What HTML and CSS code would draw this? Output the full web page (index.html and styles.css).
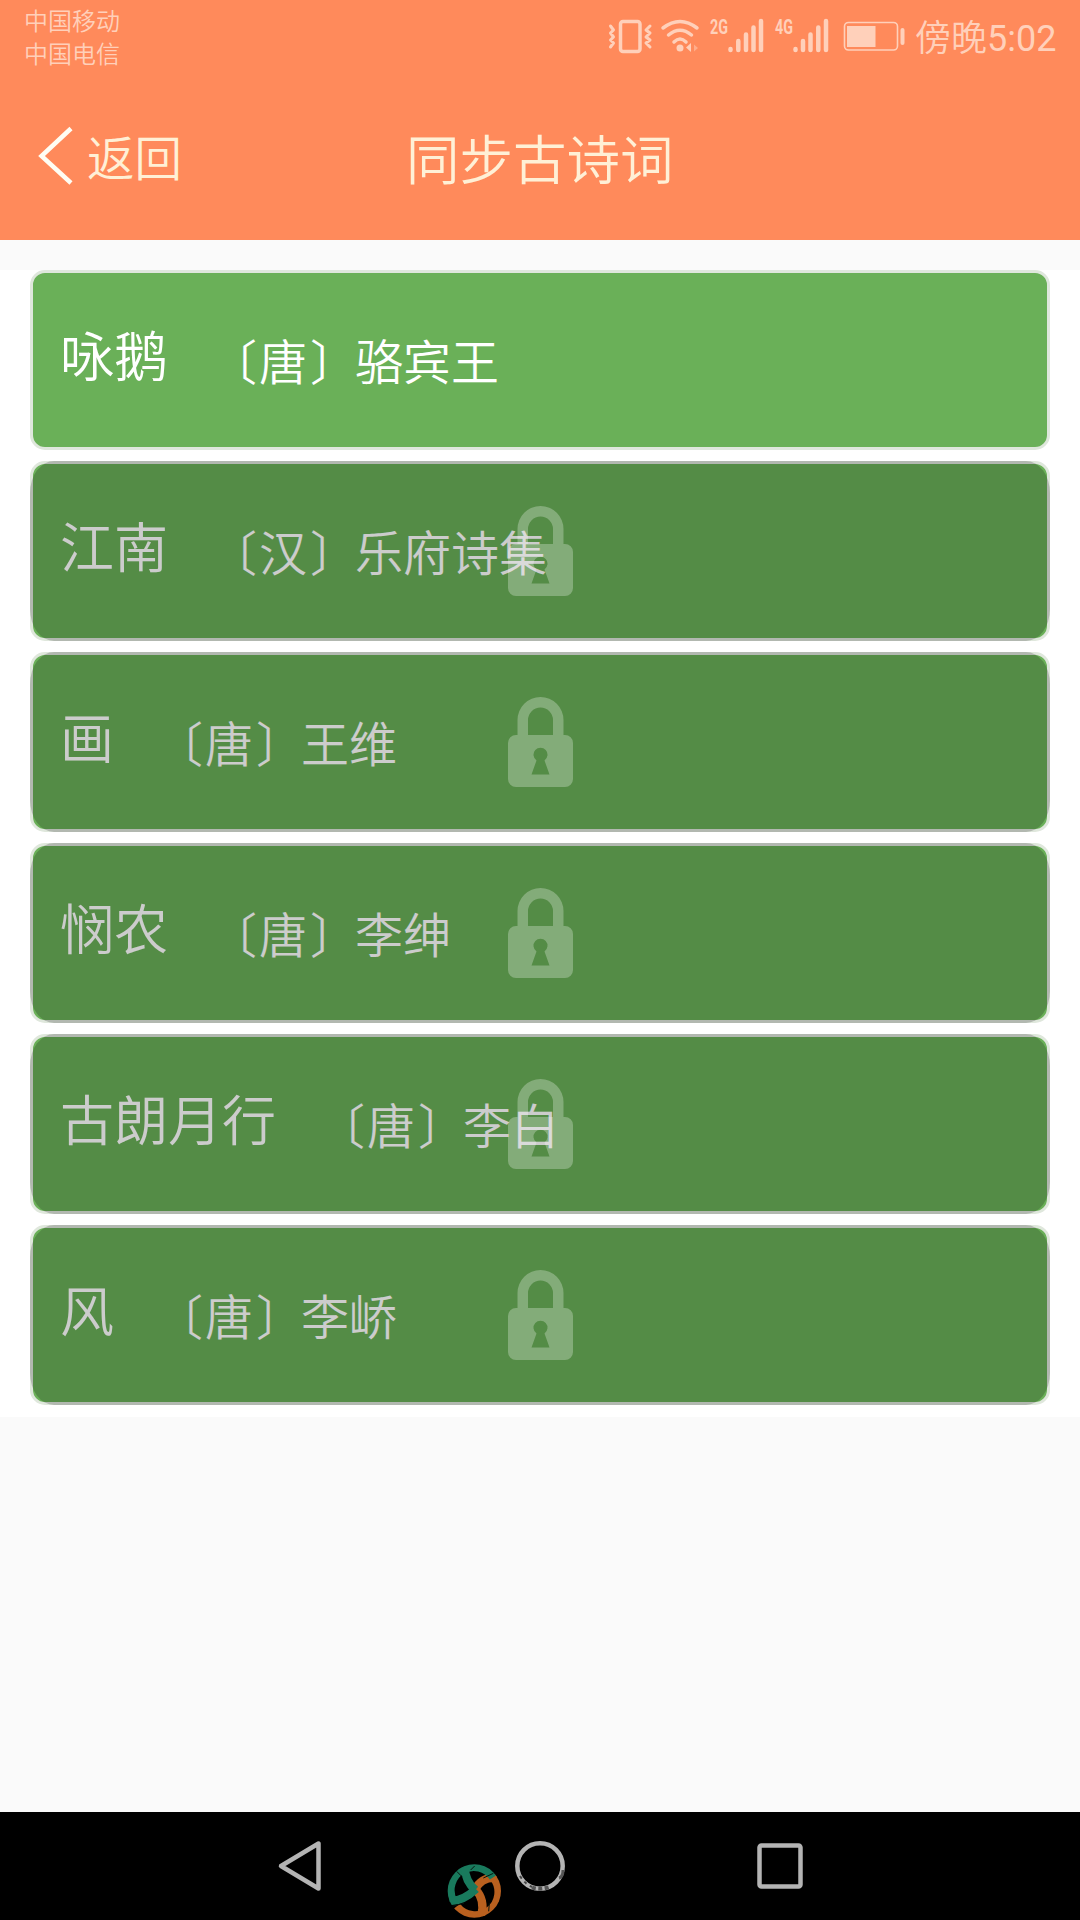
FILE: index.html
```html
<!DOCTYPE html>
<html lang="zh-CN">
<head>
<meta charset="utf-8">
<title>同步古诗词</title>
<link rel="stylesheet" href="styles.css">
</head>
<body>
<svg class="defs" width="0" height="0">
  <symbol id="lock" viewBox="0 0 65 90">
    <path fill-rule="evenodd" d="M9.500 38V23a23 23 0 0 1 46 0V38H57a8 8 0 0 1 8 8V82a8 8 0 0 1-8 8H8a8 8 0 0 1-8-8V46a8 8 0 0 1 8-8ZM20 38H45V23a12.500 12.500 0 0 0-25 0ZM28.500 63.500L23.500 77.500H41.500L36.500 63.500A7 7 0 1 0 28.500 63.500Z"/>
  </symbol>
</svg>
<header class="header">
  <div class="status">
    <div class="carriers"><span>中国移动</span><span>中国电信</span></div>
    <svg class="status-icons" width="320" height="60" viewBox="0 0 320 60">
      <g fill="none" stroke="#ffd0ba" stroke-linecap="round" stroke-linejoin="round">
        <rect x="30.500" y="21.500" width="19.500" height="30" rx="2.500" stroke-width="3.500"/>
        <path stroke-width="3" d="M20.500 26l3 4-3 3 3 4-3 3 3 3-3 4M60 26l-4 4 4 3-4 4 4 3-4 3 4 4"/>
        <path stroke-width="3.500" d="M73 28Q90 15 107 28M78.500 35Q90 25.500 101.500 35M84 42Q90 36 96 42"/>
        <path stroke-width="4.500" d="M140.500 49v1M148.300 41v9M156 34.500v15.500M163.500 27.500v22.500M171 21v29M205.500 49v1M213 41v9M220.500 34.500v15.500M228.300 27.500v22.500M236 21v29"/>
        <rect x="254.500" y="22.500" width="53" height="27.500" rx="4" stroke-width="1.600"/>
        <path stroke-width="4" d="M312.500 30v13"/>
      </g>
      <g fill="#ffd0ba">
        <circle cx="90" cy="48" r="3.500"/>
        <path d="M101 43v9l-5-4.500z"/>
        <path opacity=".5" d="M104 44.500v7l4-3.500z"/>
        <path d="M257 26h28.500v21H257z"/>
        <text class="net" x="120" y="33.500" textLength="18" lengthAdjust="spacingAndGlyphs">2G</text>
        <text class="net" x="185" y="33.500" textLength="18" lengthAdjust="spacingAndGlyphs">4G</text>
      </g>
    </svg>
    <span class="time">傍晚<span class="digits">5:02</span></span>
  </div>
  <div class="titlebar">
    <div class="back">
      <svg width="36" height="60" viewBox="0 0 36 60"><path d="M33 2.500L3.500 30L33 57" fill="none" stroke="#fffdf3" stroke-width="4.500"/></svg>
      <span>返回</span>
    </div>
    <h1>同步古诗词</h1>
  </div>
</header>
<main class="list">
  <article class="card"><h2>咏鹅</h2><p><span class="open">〔</span>唐<span class="close">〕</span>骆宾王</p></article>
  <article class="card locked"><h2>江南</h2><p><span class="open">〔</span>汉<span class="close">〕</span>乐府诗集</p><div class="shade"><svg><use href="#lock"/></svg></div></article>
  <article class="card locked"><h2>画</h2><p><span class="open">〔</span>唐<span class="close">〕</span>王维</p><div class="shade"><svg><use href="#lock"/></svg></div></article>
  <article class="card locked"><h2>悯农</h2><p><span class="open">〔</span>唐<span class="close">〕</span>李绅</p><div class="shade"><svg><use href="#lock"/></svg></div></article>
  <article class="card locked"><h2>古朗月行</h2><p><span class="open">〔</span>唐<span class="close">〕</span>李白</p><div class="shade"><svg><use href="#lock"/></svg></div></article>
  <article class="card locked"><h2>风</h2><p><span class="open">〔</span>唐<span class="close">〕</span>李峤</p><div class="shade"><svg><use href="#lock"/></svg></div></article>
</main>
<nav class="navbar">
  <svg width="1080" height="108" viewBox="0 0 1080 108" fill="none">
    <g stroke="#b4b4b4" stroke-width="4.500" stroke-linejoin="round">
      <path d="M281 54L318.500 31.500V76.500Z"/>
      <circle cx="540" cy="54" r="22.700"/>
      <rect x="759.500" y="33.500" width="41" height="41" rx="2"/>
    </g>
    <path d="M520 64Q525 72 532 75" stroke="#444" stroke-width="2" stroke-dasharray="3 4"/>
    <path d="M532 75.500Q540 78.500 551 74.500" stroke="#555" stroke-width="4" stroke-dasharray="4 2.500"/>
    <path d="M559 66Q563 65 563 58" stroke="#555" stroke-width="3"/>
    <clipPath id="ball"><circle cx="103" cy="105" r="80"/></clipPath>
    <g transform="translate(440 44) scale(.3333)" clip-path="url(#ball)">
      <g stroke="#b9601f" stroke-width="25">
        <path d="M161 65A70 70 0 0 1 50 151"/>
        <path d="M170 66Q124 62 106 100Q136 130 124 180"/>
      </g>
      <g stroke="#197a5d" stroke-width="25">
        <path d="M160 64A70 70 0 0 0 39 134"/>
        <path d="M74 34Q76 76 106 102"/>
        <path d="M28 134Q66 138 108 99"/>
      </g>
      <path d="M50 46L66 62M92 42L104 30M130 66L160 52M32 152L72 142M148 142L146 166" stroke="#08150f" stroke-width="3"/>
    </g>
  </svg>
</nav>
</body>
</html>
```
FILE: styles.css
```css
* { box-sizing: border-box; }
body {
  margin: 0;
  width: 1080px;
  height: 1920px;
  overflow: hidden;
  display: flex;
  flex-direction: column;
  background: #fafafa;
  font-family: "Noto Sans CJK SC", sans-serif;
  font-weight: 350;
}
svg { display: block; }
.defs { position: absolute; }
h1, h2, p { margin: 0; font-weight: 350; }
.header { height: 240px; background: #ff8a5b; }
.status { height: 72px; display: flex; color: #ffd0ba; }
.carriers {
  width: 590px;
  padding: 4px 0 0 24px;
  display: flex;
  flex-direction: column;
  font-size: 24px;
  line-height: 32.5px;
}
.status-icons { margin-right: 5px; }
.net { font: 700 20px Roboto, sans-serif; }
.time { font-size: 36px; line-height: 70px; white-space: nowrap; }
.digits { font-family: Roboto, sans-serif; font-size: 36px; font-weight: 400; }
.titlebar {
  height: 168px;
  padding-left: 38px;
  display: grid;
  grid-template-columns: 368px 1fr;
  color: #fff0d6;
}
.back { display: flex; gap: 13px; padding-top: 54px; font-size: 47.5px; line-height: 59px; }
h1 { padding-top: 54px; font-size: 53.5px; line-height: 61px; }
.list {
  margin-top: 30px;
  height: 1147px;
  padding: 0 30px;
  display: flex;
  flex-direction: column;
  gap: 11px;
  background: #fff;
}
.card {
  position: relative;
  height: 180px;
  display: flex;
  gap: 43px;
  padding: 0 27px;
  border: 3px solid #dfe7dc;
  border-radius: 15px;
  background: #6ab058;
  color: #fff;
  white-space: nowrap;
}
.card h2 { font-size: 54px; line-height: 162px; }
.card p { font-size: 48px; line-height: 173px; }
.open, .close { display: inline-block; }
.open { transform: translateX(-2px); }
.close { transform: translateX(3px); }
.shade {
  position: absolute;
  inset: -3px;
  display: flex;
  align-items: center;
  justify-content: center;
  border-radius: 24px / 32px;
  background: rgba(0, 0, 0, .2);
}
.shade svg { width: 65px; height: 90px; fill: rgba(255, 255, 255, .28); }
.navbar { margin-top: auto; height: 108px; background: #000; }
```
